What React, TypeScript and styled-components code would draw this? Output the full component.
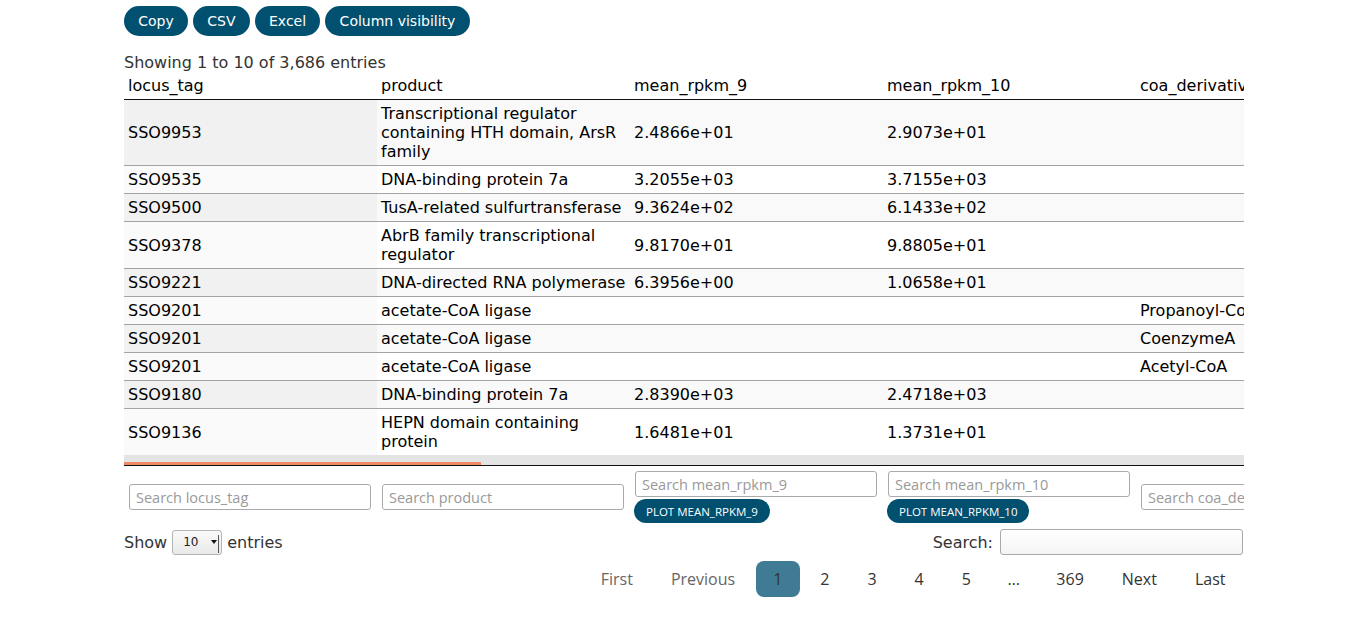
import React from 'react';
import styled, { createGlobalStyle } from 'styled-components';

const GlobalStyle = createGlobalStyle`
  body {
    margin: 0;
    background: #fff;
    font-family: 'DejaVu Sans', 'Liberation Sans', sans-serif;
    color: #000;
  }
`;

const VIEW_WIDTH = 1120;
const SCROLL_WIDTH = 3514;
const COL_WIDTH = 253;
const BRAND = '#02506f';

interface IRow {
  locus: string;
  product: string;
  rpkm9: string;
  rpkm10: string;
  coa: string;
}

const rows: IRow[] = [
  { locus: 'SSO9953', product: 'Transcriptional regulator containing HTH domain, ArsR family', rpkm9: '2.4866e+01', rpkm10: '2.9073e+01', coa: '' },
  { locus: 'SSO9535', product: 'DNA-binding protein 7a', rpkm9: '3.2055e+03', rpkm10: '3.7155e+03', coa: '' },
  { locus: 'SSO9500', product: 'TusA-related sulfurtransferase', rpkm9: '9.3624e+02', rpkm10: '6.1433e+02', coa: '' },
  { locus: 'SSO9378', product: 'AbrB family transcriptional regulator', rpkm9: '9.8170e+01', rpkm10: '9.8805e+01', coa: '' },
  { locus: 'SSO9221', product: 'DNA-directed RNA polymerase', rpkm9: '6.3956e+00', rpkm10: '1.0658e+01', coa: '' },
  { locus: 'SSO9201', product: 'acetate-CoA ligase', rpkm9: '', rpkm10: '', coa: 'Propanoyl-CoA' },
  { locus: 'SSO9201', product: 'acetate-CoA ligase', rpkm9: '', rpkm10: '', coa: 'CoenzymeA' },
  { locus: 'SSO9201', product: 'acetate-CoA ligase', rpkm9: '', rpkm10: '', coa: 'Acetyl-CoA' },
  { locus: 'SSO9180', product: 'DNA-binding protein 7a', rpkm9: '2.8390e+03', rpkm10: '2.4718e+03', coa: '' },
  { locus: 'SSO9136', product: 'HEPN domain containing protein', rpkm9: '1.6481e+01', rpkm10: '1.3731e+01', coa: '' },
];

const columns = ['locus_tag', 'product', 'mean_rpkm_9', 'mean_rpkm_10', 'coa_derivative'];
const plotColumns = ['mean_rpkm_9', 'mean_rpkm_10'];

const Page = styled.div`
  width: ${VIEW_WIDTH}px;
  margin-left: 124px;
  padding-top: 6px;
`;

const Toolbar = styled.div`
  display: flex;
  gap: 5px;
`;

const ToolButton = styled.button`
  height: 30px;
  padding: 0 14.25px;
  border: none;
  border-radius: 15px;
  background: ${BRAND};
  color: #fff;
  font-family: 'DejaVu Sans', sans-serif;
  font-size: 14px;
  cursor: pointer;
`;

const Info = styled.div`
  margin-top: 17px;
  font-size: 16px;
  line-height: 19px;
  color: #333;
`;

const ScrollBox = styled.div<{ $bottomBorder?: boolean }>`
  width: ${VIEW_WIDTH}px;
  overflow: hidden;
  ${(p) => (p.$bottomBorder ? 'border-bottom: 1px solid #111;' : '')}
`;

const Table = styled.table`
  table-layout: fixed;
  border-collapse: collapse;
  width: ${COL_WIDTH * columns.length}px;
  font-size: 16px;
  line-height: 19px;
`;

const HeadCell = styled.th`
  text-align: left;
  font-weight: normal;
  padding: 4px 4px 4px;
  border-bottom: 1px solid #111;
  white-space: nowrap;
  overflow: hidden;
`;

const BodyRow = styled.tr`
  & + & > td {
    border-top: 1px solid #a3a3a3;
  }
`;

const Cell = styled.td<{ $odd: boolean; $sorted: boolean }>`
  padding: 4px;
  vertical-align: middle;
  white-space: normal;
  overflow: hidden;
  background: ${(p) =>
    p.$sorted ? (p.$odd ? '#f1f1f1' : '#fafafa') : p.$odd ? '#f9f9f9' : '#fff'};
`;

const ScrollTrack = styled.div`
  height: 10px;
  background: #e4e4e4;
  position: relative;
`;

const ScrollThumb = styled.div`
  position: absolute;
  left: 0;
  bottom: 0;
  height: 3px;
  background: #ef8a66;
`;

const FootCell = styled.td`
  padding: 5px 6px 4px 5px;
  vertical-align: middle;
`;

const FilterStack = styled.div`
  display: flex;
  flex-direction: column;
  align-items: flex-start;
  gap: 2px;
`;

const FilterInput = styled.input`
  box-sizing: border-box;
  width: 242px;
  height: 26px;
  padding: 0 6px;
  border: 1px solid #aaa;
  border-radius: 3px;
  font-family: 'Open Sans', sans-serif;
  font-size: 14.5px;
  color: #333;
  &::placeholder {
    color: #999;
  }
`;

const PlotButton = styled.button`
  height: 24px;
  padding: 0 12px;
  margin-left: -1px;
  border: none;
  border-radius: 12px;
  background: ${BRAND};
  color: #fff;
  font-family: 'Open Sans', sans-serif;
  font-size: 11.5px;
  cursor: pointer;
`;

const Controls = styled.div`
  display: flex;
  justify-content: space-between;
  align-items: center;
  margin-top: 2px;
  height: 26px;
  font-size: 16px;
  color: #333;
`;

const LengthBox = styled.label`
  display: flex;
  align-items: center;
  gap: 5px;
`;

const FakeSelect = styled.div`
  box-sizing: border-box;
  position: relative;
  width: 50px;
  height: 25px;
  margin-top: 1px;
  padding-left: 10px;
  border: 1px solid #b5b5b5;
  border-radius: 3px;
  background: linear-gradient(#fafafa, #e9e9e9);
  font-size: 12px;
  line-height: 23px;
  color: #222;
`;

const Caret = styled.span`
  position: absolute;
  right: 4px;
  top: 9px;
  width: 0;
  height: 0;
  border-left: 3px solid transparent;
  border-right: 3px solid transparent;
  border-top: 4px solid #111;
  &::after {
    content: '';
    position: absolute;
    left: 4px;
    top: -9px;
    width: 1px;
    height: 18px;
    background: #555;
  }
`;

const SearchBox = styled.label`
  display: flex;
  align-items: center;
  gap: 7px;
`;

const SearchInput = styled.input`
  box-sizing: border-box;
  width: 243px;
  height: 26px;
  margin-right: 1px;
  border: 1px solid #aaa;
  border-radius: 3px;
  background: linear-gradient(#fff, #f4f4f4);
`;

const Pager = styled.div`
  display: flex;
  justify-content: flex-end;
  align-items: center;
  gap: 3px;
  margin-top: 6px;
  margin-right: 1px;
  font-family: 'Open Sans', sans-serif;
  font-size: 16px;
`;

const PageButton = styled.span<{ $current?: boolean; $disabled?: boolean }>`
  padding: 7px 17.5px;
  line-height: 22px;
  border-radius: 8px;
  color: ${(p) => (p.$disabled ? '#666' : '#333')};
  background: ${(p) => (p.$current ? '#3f7b95' : 'transparent')};
  cursor: ${(p) => (p.$disabled ? 'default' : 'pointer')};
`;

const Ellipsis = styled.span`
  padding: 0 16px;
  color: #333;
`;

const Cols = () => (
  <colgroup>
    {columns.map((c) => (
      <col key={c} style={{ width: COL_WIDTH }} />
    ))}
  </colgroup>
);

export default function App() {
  const thumbWidth = (VIEW_WIDTH * VIEW_WIDTH) / SCROLL_WIDTH;

  return (
    <Page>
      <GlobalStyle />
      <Toolbar>
        <ToolButton>Copy</ToolButton>
        <ToolButton>CSV</ToolButton>
        <ToolButton>Excel</ToolButton>
        <ToolButton>Column visibility</ToolButton>
      </Toolbar>
      <Info>Showing 1 to 10 of 3,686 entries</Info>

      <ScrollBox>
        <Table>
          <Cols />
          <thead>
            <tr>
              {columns.map((c) => (
                <HeadCell key={c}>{c}</HeadCell>
              ))}
            </tr>
          </thead>
        </Table>
      </ScrollBox>

      <ScrollBox $bottomBorder>
        <Table>
          <Cols />
          <tbody>
            {rows.map((r, i) => {
              const odd = i % 2 === 0;
              return (
                <BodyRow key={i}>
                  <Cell $odd={odd} $sorted>{r.locus}</Cell>
                  <Cell $odd={odd} $sorted={false}>{r.product}</Cell>
                  <Cell $odd={odd} $sorted={false}>{r.rpkm9}</Cell>
                  <Cell $odd={odd} $sorted={false}>{r.rpkm10}</Cell>
                  <Cell $odd={odd} $sorted={false}>{r.coa}</Cell>
                </BodyRow>
              );
            })}
          </tbody>
        </Table>
        <ScrollTrack>
          <ScrollThumb style={{ width: thumbWidth }} />
        </ScrollTrack>
      </ScrollBox>

      <ScrollBox>
        <Table>
          <Cols />
          <tfoot>
            <tr>
              {columns.map((c) => (
                <FootCell key={c}>
                  <FilterStack>
                    <FilterInput placeholder={`Search ${c}`} />
                    {plotColumns.includes(c) && (
                      <PlotButton>PLOT {c.toUpperCase()}</PlotButton>
                    )}
                  </FilterStack>
                </FootCell>
              ))}
            </tr>
          </tfoot>
        </Table>
      </ScrollBox>

      <Controls>
        <LengthBox>
          Show
          <FakeSelect>
            10
            <Caret />
          </FakeSelect>
          entries
        </LengthBox>
        <SearchBox>
          Search:
          <SearchInput />
        </SearchBox>
      </Controls>

      <Pager>
        <PageButton $disabled>First</PageButton>
        <PageButton $disabled>Previous</PageButton>
        <PageButton $current>1</PageButton>
        <PageButton>2</PageButton>
        <PageButton>3</PageButton>
        <PageButton>4</PageButton>
        <PageButton>5</PageButton>
        <Ellipsis>…</Ellipsis>
        <PageButton>369</PageButton>
        <PageButton>Next</PageButton>
        <PageButton>Last</PageButton>
      </Pager>
    </Page>
  );
}
